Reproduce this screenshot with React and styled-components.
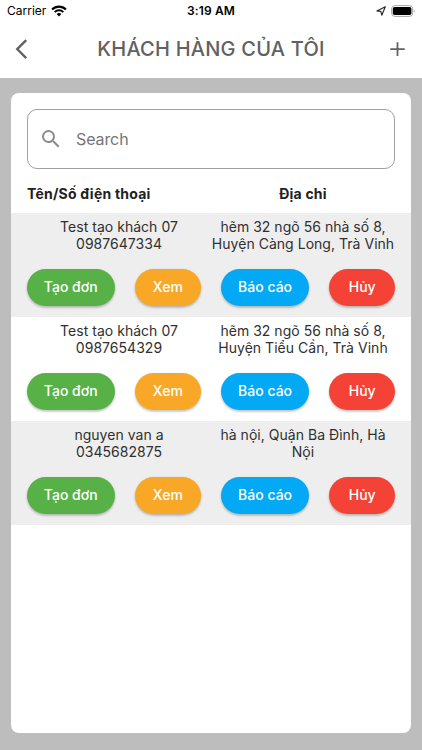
import React from "react";
import styled, { createGlobalStyle } from "styled-components";

const customers = [
  {
    name: "Test tạo khách 07",
    phone: "0987647334",
    address: ["hẽm 32 ngõ 56 nhà số 8,", "Huyện Càng Long, Trà Vinh"],
  },
  {
    name: "Test tạo khách 07",
    phone: "0987654329",
    address: ["hẽm 32 ngõ 56 nhà số 8,", "Huyện Tiểu Cần, Trà Vinh"],
  },
  {
    name: "nguyen van a",
    phone: "0345682875",
    address: ["hà nội, Quận Ba Đình, Hà", "Nội"],
  },
];

const StatusIcons = () => (
  <StatusRight>
    <svg width="10" height="10" viewBox="0 0 10 10" fill="none">
      <path
        d="M9.3 0.7L0.9 4.9L4.8 5.4L5.8 9.2Z"
        stroke="#222"
        strokeWidth="1.1"
        strokeLinejoin="round"
      />
    </svg>
    <svg width="24" height="12" viewBox="0 0 24 12">
      <rect x="0.6" y="0.6" width="21" height="10.8" rx="3.2" fill="#fff" stroke="#a6a6a6" />
      <rect x="1.8" y="2" width="18.6" height="8" rx="1.8" fill="#000" />
      <path d="M22.8 4.2c1.2.5 1.2 3.1 0 3.6z" fill="#a6a6a6" />
    </svg>
  </StatusRight>
);

const Customer = ({ customer }) => (
  <Row>
    <Info>
      <Cell>
        <Line>{customer.name}</Line>
        <Line>{customer.phone}</Line>
      </Cell>
      <Cell>
        {customer.address.map((line) => (
          <Line key={line}>{line}</Line>
        ))}
      </Cell>
    </Info>
    <Actions>
      <Button $color="#57b147">Tạo đơn</Button>
      <Button $color="#f9a727" $small>
        Xem
      </Button>
      <Button $color="#03a9f4">Báo cáo</Button>
      <Button $color="#f44336" $small>
        Hủy
      </Button>
    </Actions>
  </Row>
);

const App = () => {
  return (
    <Screen>
      <GlobalStyle />
      <StatusBar>
        <Carrier>
          <span>Carrier</span>
          <svg width="16" height="12" viewBox="0 0 16 12" fill="none" stroke="#000">
            <path d="M1.1 4.5a9.8 9.8 0 0 1 13.8 0" strokeWidth="2.1" />
            <path d="M3.7 7.1a6.1 6.1 0 0 1 8.6 0" strokeWidth="2" />
            <path d="M8 11.6L5.6 9.1a3.4 3.4 0 0 1 4.8 0z" fill="#000" stroke="none" />
          </svg>
        </Carrier>
        <Clock>3:19 AM</Clock>
        <StatusIcons />
      </StatusBar>
      <Header>
        <svg width="14" height="20" viewBox="0 0 14 20" fill="none">
          <path d="M12.2 1.1L3.2 10.1L12.2 19.1" stroke="#616161" strokeWidth="2.3" />
        </svg>
        <Title>KHÁCH HÀNG CỦA TÔI</Title>
        <svg width="15" height="14" viewBox="0 0 15 14" fill="none">
          <path d="M7.5 0.2V14M0.3 7.2H14.7" stroke="#616161" strokeWidth="1.8" />
        </svg>
      </Header>
      <Body>
        <Panel>
          <Search>
            <svg width="24" height="24" viewBox="0 0 24 24" fill="#8b8b8b">
              <path d="M15.5 14h-.79l-.28-.27A6.471 6.471 0 0 0 16 9.5 6.5 6.5 0 1 0 9.5 16c1.61 0 3.09-.59 4.23-1.57l.27.28v.79l5 4.99L20.49 19l-4.99-5zm-6 0C7.01 14 5 11.99 5 9.5S7.01 5 9.5 5 14 7.01 14 9.5 11.99 14 9.5 14z" />
            </svg>
            <input placeholder="Search" />
          </Search>
          <TableHead>
            <span>Tên/Số điện thoại</span>
            <span>Địa chỉ</span>
          </TableHead>
          {customers.map((customer) => (
            <Customer key={customer.phone} customer={customer} />
          ))}
        </Panel>
      </Body>
    </Screen>
  );
};

const GlobalStyle = createGlobalStyle`
  * {
    box-sizing: border-box;
  }
  body {
    margin: 0;
    font-family: Inter, "Liberation Sans", sans-serif;
  }
  svg {
    display: block;
    flex-shrink: 0;
  }
`;

const Screen = styled.div`
  display: flex;
  flex-direction: column;
  height: 100vh;
  background: #fff;
`;

const StatusBar = styled.div`
  display: grid;
  grid-template-columns: 1fr auto 1fr;
  align-items: center;
  height: 22px;
  padding: 0 7px 1px;
  color: #000;
`;

const Carrier = styled.div`
  display: flex;
  align-items: center;
  gap: 5px;
  font-size: 12px;
`;

const Clock = styled.div`
  font-size: 12px;
  font-weight: 600;
  letter-spacing: 0.15px;
`;

const StatusRight = styled.div`
  display: flex;
  justify-content: flex-end;
  align-items: center;
  gap: 5px;
`;

const Header = styled.header`
  display: flex;
  align-items: center;
  justify-content: space-between;
  height: 56px;
  padding: 0 17px 2px 14px;
`;

const Title = styled.h1`
  margin: 0;
  padding-left: 4px;
  color: #616161;
  font-size: 20px;
  font-weight: 450;
  letter-spacing: 0.22px;
  white-space: nowrap;
`;

const Body = styled.main`
  flex: 1;
  display: flex;
  padding: 15px 11px 17px;
  background: #bdbdbd;
`;

const Panel = styled.section`
  flex: 1;
  min-width: 0;
  padding-top: 16px;
  border-radius: 8px;
  background: #fff;
`;

const Search = styled.label`
  display: flex;
  align-items: center;
  gap: 13px;
  height: 60px;
  margin: 0 16px;
  padding-left: 11px;
  border: 1px solid #a0a0a0;
  border-radius: 10px;

  input {
    flex: 1;
    min-width: 0;
    padding: 0;
    border: 0;
    outline: 0;
    background: none;
    font: 400 16px Inter, sans-serif;
    letter-spacing: -0.1px;
  }
  input::placeholder {
    color: #757575;
    opacity: 1;
  }
`;

const TableHead = styled.div`
  display: grid;
  grid-template-columns: 1fr 1fr;
  align-items: center;
  height: 44px;
  padding: 5px 16px 0;
  color: #212121;
  font-size: 14px;
  font-weight: 650;
  letter-spacing: 0.22px;

  span:last-child {
    text-align: center;
  }
`;

const Row = styled.div`
  height: 104px;
  padding: 5px 16px 0;

  &:nth-child(odd) {
    background: #eee;
  }
`;

const Info = styled.div`
  display: grid;
  grid-template-columns: repeat(2, minmax(0, 1fr));
  height: 51px;
`;

const Cell = styled.div`
  text-align: center;
`;

const Line = styled.div`
  color: #303030;
  font-size: 14px;
  line-height: 17px;
  letter-spacing: 0.03px;
  white-space: nowrap;
`;

const Actions = styled.div`
  display: flex;
  justify-content: space-between;
`;

const Button = styled.button`
  width: ${(props) => (props.$small ? "65.5px" : "87.5px")};
  height: 37px;
  padding: 0 0 2px;
  border: 0;
  border-radius: 19px;
  background: ${(props) => props.$color};
  box-shadow: 0 2px 2px rgba(0, 0, 0, 0.14), 0 1px 3px rgba(0, 0, 0, 0.12);
  color: #fff;
  font: 500 14px Inter, sans-serif;
`;

export default App;
